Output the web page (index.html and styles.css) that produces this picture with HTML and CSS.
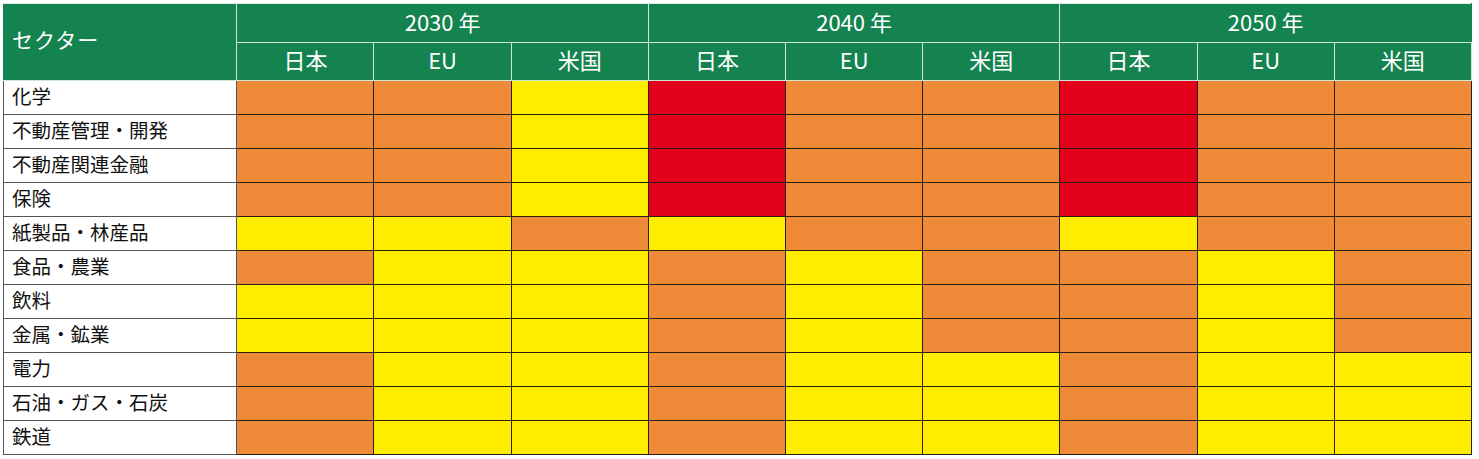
FILE: index.html
```html
<!DOCTYPE html>
<html lang="ja">
<head>
<meta charset="utf-8">
<title>セクター別リスク</title>
<link rel="stylesheet" href="styles.css">
</head>
<body>
<table class="grid">
  <colgroup>
    <col class="c-sector">
    <col class="c-val"><col class="c-val"><col class="c-val">
    <col class="c-val"><col class="c-val"><col class="c-val">
    <col class="c-val"><col class="c-val"><col class="c-val">
  </colgroup>
  <thead>
    <tr class="h1">
      <th rowspan="2" class="sector-h">セクター</th>
      <th colspan="3">2030 年</th>
      <th colspan="3">2040 年</th>
      <th colspan="3">2050 年</th>
    </tr>
    <tr class="h2">
      <th>日本</th><th>EU</th><th>米国</th>
      <th>日本</th><th>EU</th><th>米国</th>
      <th>日本</th><th>EU</th><th>米国</th>
    </tr>
  </thead>
  <tbody>
    <tr><td class="name">化学</td><td class="o"></td><td class="o"></td><td class="y"></td><td class="r"></td><td class="o"></td><td class="o"></td><td class="r"></td><td class="o"></td><td class="o"></td></tr>
    <tr><td class="name">不動産管理・開発</td><td class="o"></td><td class="o"></td><td class="y"></td><td class="r"></td><td class="o"></td><td class="o"></td><td class="r"></td><td class="o"></td><td class="o"></td></tr>
    <tr><td class="name">不動産関連金融</td><td class="o"></td><td class="o"></td><td class="y"></td><td class="r"></td><td class="o"></td><td class="o"></td><td class="r"></td><td class="o"></td><td class="o"></td></tr>
    <tr><td class="name">保険</td><td class="o"></td><td class="o"></td><td class="y"></td><td class="r"></td><td class="o"></td><td class="o"></td><td class="r"></td><td class="o"></td><td class="o"></td></tr>
    <tr><td class="name">紙製品・林産品</td><td class="y"></td><td class="y"></td><td class="o"></td><td class="y"></td><td class="o"></td><td class="o"></td><td class="y"></td><td class="o"></td><td class="o"></td></tr>
    <tr><td class="name">食品・農業</td><td class="o"></td><td class="y"></td><td class="y"></td><td class="o"></td><td class="y"></td><td class="o"></td><td class="o"></td><td class="y"></td><td class="o"></td></tr>
    <tr><td class="name">飲料</td><td class="y"></td><td class="y"></td><td class="y"></td><td class="o"></td><td class="y"></td><td class="o"></td><td class="o"></td><td class="y"></td><td class="o"></td></tr>
    <tr><td class="name">金属・鉱業</td><td class="y"></td><td class="y"></td><td class="y"></td><td class="o"></td><td class="y"></td><td class="o"></td><td class="o"></td><td class="y"></td><td class="o"></td></tr>
    <tr><td class="name">電力</td><td class="o"></td><td class="y"></td><td class="y"></td><td class="o"></td><td class="y"></td><td class="y"></td><td class="o"></td><td class="y"></td><td class="y"></td></tr>
    <tr><td class="name">石油・ガス・石炭</td><td class="o"></td><td class="y"></td><td class="y"></td><td class="o"></td><td class="y"></td><td class="y"></td><td class="o"></td><td class="y"></td><td class="y"></td></tr>
    <tr><td class="name">鉄道</td><td class="o"></td><td class="y"></td><td class="y"></td><td class="o"></td><td class="y"></td><td class="y"></td><td class="o"></td><td class="y"></td><td class="y"></td></tr>
  </tbody>
</table>
</body>
</html>
```
FILE: styles.css
```css
html, body {
  margin: 0;
  background: #ffffff;
}
body {
  padding: 3px 0 0 3px;
  font-family: "Noto Sans CJK JP", "Noto Sans", sans-serif;
}
.grid {
  border-collapse: collapse;
  table-layout: fixed;
  width: 1469px;
}
.c-sector { width: 233px; }
.c-val { width: 137px; }

.grid th {
  background: #15834f;
  color: #ffffff;
  font-weight: 400;
  font-size: 22px;
  border: 1px solid #cfe6d6;
  padding: 0 0 5px 0;
  text-align: center;
  line-height: 1;
}
.grid .h1 th { height: 33px; }
.grid .h2 th { height: 32px; }
.grid .h1 th:last-child { border-right-color: #15834f; }
.grid .h1 th { border-top-color: #dfeee4; }
.grid th.sector-h {
  text-align: left;
  padding-left: 8px;
  font-size: 21px;
  letter-spacing: 1px;
  border-left-color: #15834f;
}

.grid td {
  height: 34px;
  padding: 0;
  border: 1px solid #2a2016;
  box-sizing: border-box;
}
.grid td.name {
  background: #ffffff;
  color: #111111;
  font-size: 19.5px;
  padding: 0 0 3px 8px;
  border-color: #555555;
  line-height: 1;
}
.o { background: #ef8b38; }
.y { background: #ffed00; }
.r { background: #e3001b; }
```
